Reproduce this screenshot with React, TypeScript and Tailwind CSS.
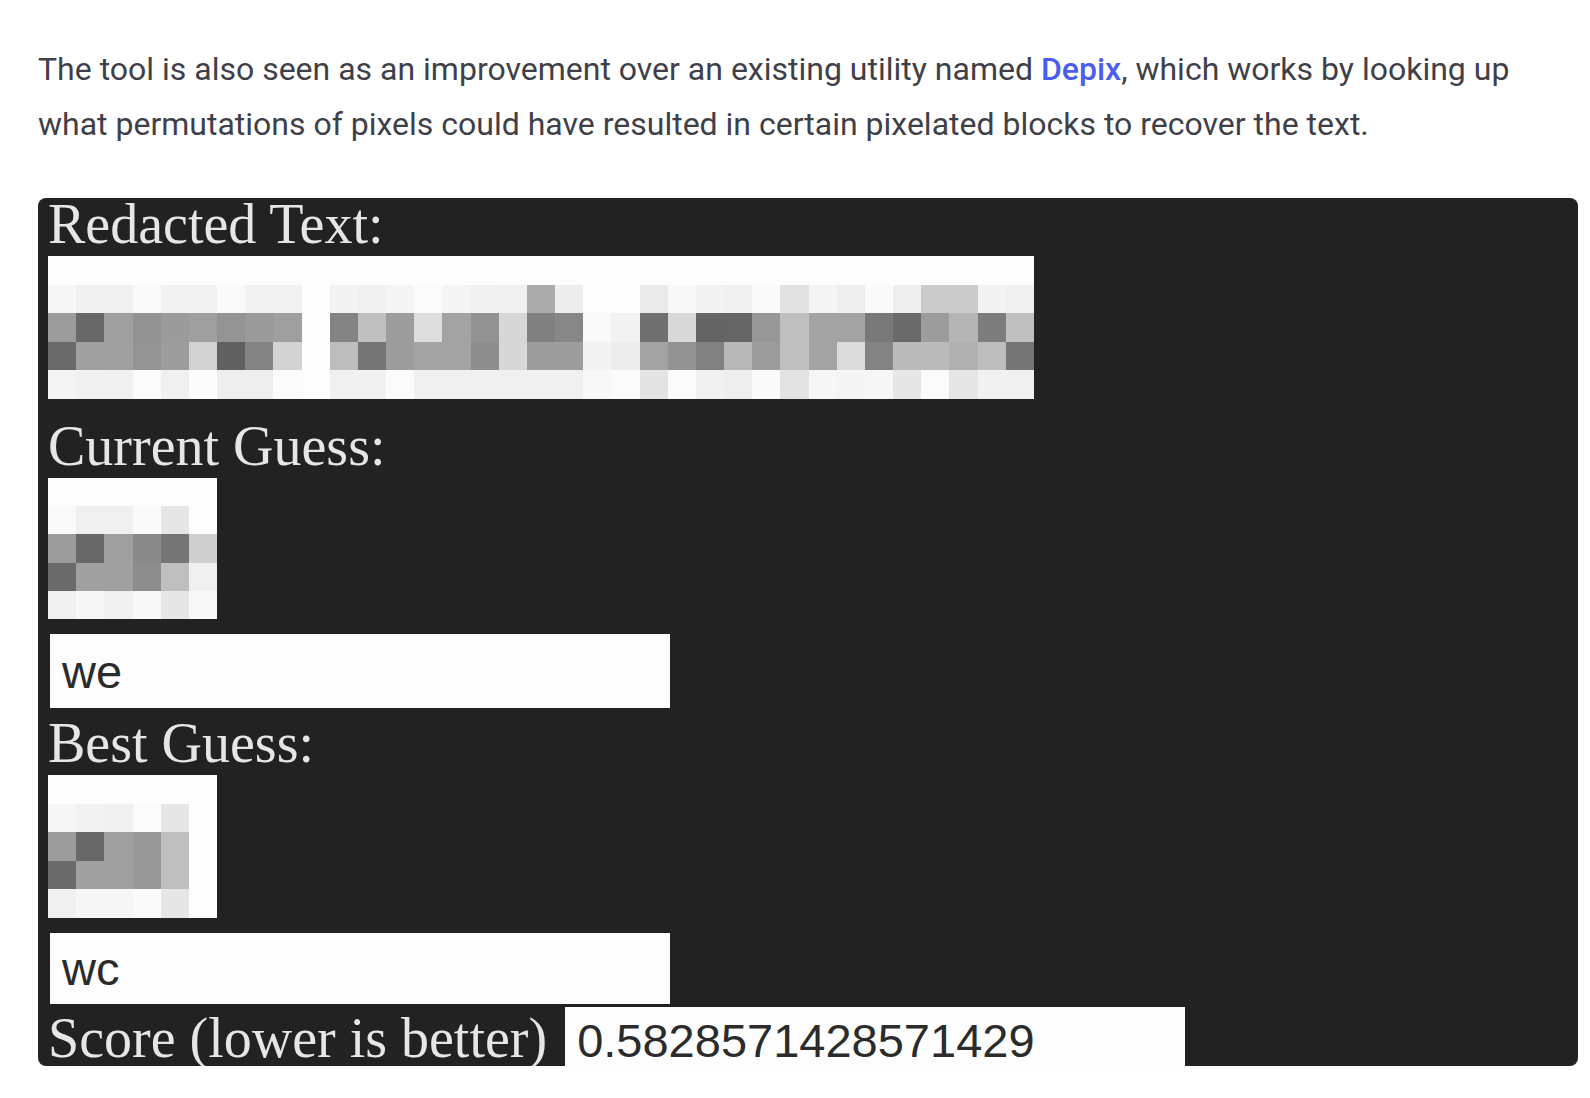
type MosaicProps = { label: string; rows: string[]; className: string };

/* Each row lists one two-digit grey level per block. */
const redacted = [
  "fd fd fd fd fd fd fd fd fd fd fd fd fd fd fd fd fd fd fd fd fd fd fd fd fd fd fd fd fd fd fd fd fd fd fd",
  "f7 f0 f0 fa f2 f2 fa f2 f2 fd f3 f0 f5 fb f5 f1 f0 ab ed fd fd ea f8 f3 f0 fa e2 f4 ee fa ee cb cb f3 f0",
  "9c 68 9f 93 9b 9f 94 9a 9f fd 83 bf 9c dd a3 92 d7 80 87 fa f2 70 d8 64 65 98 bf a3 a3 78 6a 9c b5 7d c0",
  "6a a0 a0 94 9d d3 60 83 d3 fd bd 75 9c a3 a3 8d d7 9d 9d f3 ed a3 93 81 b8 9c bf a3 db 83 bb bb b0 bd 75",
  "f4 f1 f0 fb f0 fc ee ee fb fd f0 f1 fb f0 f0 f1 f0 f0 f0 f8 fb e4 fb f1 ee fa e3 f6 f4 f6 e6 fb e6 f1 f0",
];

const current = [
  "fd fd fd fd fd fd",
  "fa f0 f0 fa e6 fd",
  "9c 68 9f 8a 75 cf",
  "6a a0 a0 8d bf f0",
  "f0 f7 f1 f8 e6 f8",
];

const best = [
  "fd fd fd fd fd fd",
  "f6 f2 f0 fb e6 fd",
  "9c 68 a0 98 bf fd",
  "6a a0 a0 98 bf fd",
  "f0 f6 f6 fa e6 fd",
];

function Mosaic({ label, rows, className }: MosaicProps) {
  const columns = rows[0].split(" ").length;
  return (
    <svg
      role="img"
      aria-label={label}
      viewBox={`0 0 ${columns} ${rows.length}`}
      preserveAspectRatio="none"
      shapeRendering="crispEdges"
      className={className}
    >
      <rect width={columns} height={rows.length} fill="#fdfdfd" />
      {rows.map((row, y) =>
        row.split(" ").map((grey, x) => (
          <rect key={`${x}-${y}`} x={x} y={y} width={1} height={1} fill={`#${grey}${grey}${grey}`} />
        )),
      )}
    </svg>
  );
}

const labelClass = "block text-[56px] text-[#e6e6e6]";
const inputClass =
  "block w-[620px] max-w-full bg-[#fdfdfd] px-3 font-['Liberation_Sans',sans-serif] text-[47px] text-[#2b2b2b] outline-none";

export default function App() {
  return (
    <main className="min-h-screen bg-white pt-[42px] pr-3 pb-8 pl-[38px]">
      <p className="pr-12 font-['Roboto',sans-serif] text-[32px] leading-[55px] text-[#3f3f4a]">
        The tool is also seen as an improvement over an existing utility named{" "}
        <a href="#depix" className="font-medium text-[#4b5df0]">
          Depix
        </a>
        , which works by looking up what permutations of pixels could have resulted in certain
        pixelated blocks to recover the text.
      </p>

      <section className="mt-[46px] overflow-hidden rounded-lg bg-[#232223] pl-[10px] font-['Liberation_Serif',serif]">
        <h2 className="pb-1.5 text-[56px] leading-[52px] text-[#e6e6e6]">Redacted Text:</h2>
        <Mosaic label="Redacted text" rows={redacted} className="h-[143px] w-[986px] max-w-full" />

        <label htmlFor="current" className={`${labelClass} mt-[19px] pb-1 leading-[56px]`}>
          Current Guess:
        </label>
        <Mosaic label="Current guess, pixelated" rows={current} className="h-[141px] w-[169px]" />
        <div className="mt-[15px] pl-[2px]">
          <input id="current" type="text" defaultValue="we" className={`${inputClass} h-[74px]`} />
        </div>

        <label htmlFor="best" className={`${labelClass} mt-[7px] pb-1 leading-[56px]`}>
          Best Guess:
        </label>
        <Mosaic label="Best guess, pixelated" rows={best} className="h-[143px] w-[169px]" />
        <div className="mt-[15px] pl-[2px]">
          <input id="best" type="text" defaultValue="wc" className={`${inputClass} h-[71px]`} />
        </div>

        <div className="mt-[3px] flex h-[59px] items-start gap-[18px] overflow-hidden">
          <label htmlFor="score" className={`${labelClass} shrink-0 whitespace-nowrap leading-[62px]`}>
            Score (lower is better)
          </label>
          <input
            id="score"
            type="text"
            defaultValue="0.5828571428571429"
            className={`${inputClass} h-[68px] shrink-0`}
          />
        </div>
      </section>
    </main>
  );
}
